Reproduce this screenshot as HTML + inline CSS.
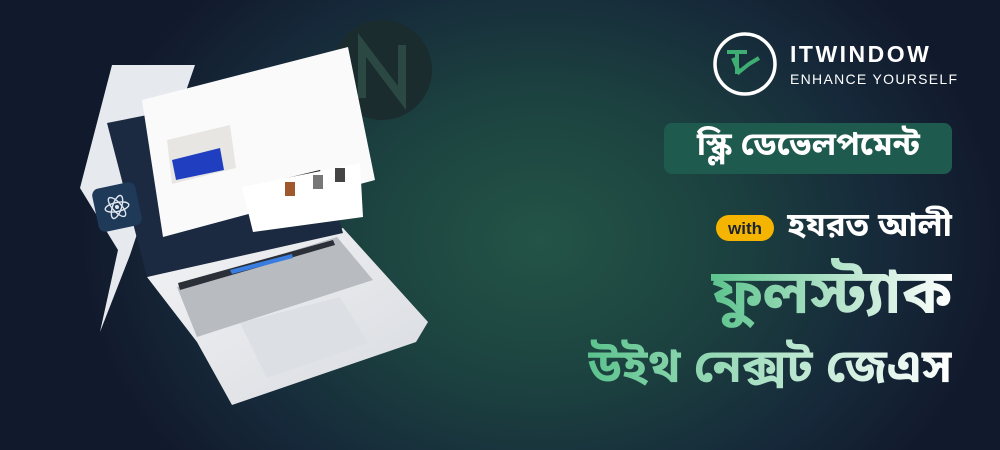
<!DOCTYPE html><html><head><meta charset="utf-8"><style>
*{margin:0;padding:0;box-sizing:border-box}
body{width:1000px;height:450px;overflow:hidden;position:relative;font-family:"Liberation Sans",sans-serif;
background:radial-gradient(ellipse 460px 360px at 540px 240px,#235446 0%,#1c4240 40%,#16293a 75%,#111a2c 100%)}
.t{position:absolute;right:48px;text-align:right;font-weight:bold;font-family:"Liberation Sans","Noto Sans Bengali","Lohit Bengali",sans-serif;white-space:nowrap}
.g{background:linear-gradient(90deg,#5cc38d,#bfe8d2 60%,#ffffff);-webkit-background-clip:text;background-clip:text;color:transparent}
</style></head><body>
<svg width="1000" height="450" style="position:absolute;left:0;top:0">
<defs><linearGradient id="bs" x1="0" y1="0" x2="1" y2="1"><stop offset="0" stop-color="#f2f3f5"/><stop offset="1" stop-color="#d8dbe0"/></linearGradient></defs>
<circle cx="382" cy="70" r="50" fill="#1a2c2d"/>
<path d="M362 98V45L402 98V45" stroke="#2b4843" stroke-width="8" fill="none"/>
<polygon points="112,65 195,65 150,195 130,255 100,332 118,250 80,188" fill="#e6e9ee"/>
<polygon points="147,277 343,228 428,322 416,342 232,405 197,342" fill="url(#bs)"/>
<polygon points="177,287 337,237 373,280 197,337" fill="#b8bcc1"/>
<polygon points="178,283 333,240 335,245 180,290" fill="#2a2f38"/>
<polygon points="230,270 292,254 293,258 232,274" fill="#3a7de0"/>
<polygon points="240,323 340,297 368,343 267,378" fill="#dcdfe3"/>
<polygon points="107,123 300,85 343,233 147,277" fill="#1b2a40"/>
<polygon points="142,100 348,47 375,180 163,237" fill="#fafafa"/>
<polygon points="167,140 230,125 236,168 172,184" fill="#e8e6e2"/>
<polygon points="172,160 220,148 224,170 176,180" fill="#1f3ec0"/>
<polygon points="262,184 320,170 322,174 264,188" fill="#111"/>
<polygon points="242,187 360,163 363,217 253,232" fill="#ffffff"/>
<rect x="285" y="182" width="10" height="14" fill="#a0592e"/>
<rect x="313" y="175" width="10" height="14" fill="#777"/>
<rect x="335" y="168" width="10" height="14" fill="#444"/>
<g transform="translate(117,207) rotate(-12)"><rect x="-22" y="-22" width="44" height="44" rx="7" fill="#1e3a58"/>
<g stroke="#dfe6ee" stroke-width="1.4" fill="none"><ellipse rx="12" ry="4.5"/><ellipse rx="12" ry="4.5" transform="rotate(60)"/><ellipse rx="12" ry="4.5" transform="rotate(-60)"/></g><circle r="2" fill="#dfe6ee"/></g>
<circle cx="745" cy="64" r="30" fill="none" stroke="#fff" stroke-width="3.5"/>
<path d="M727 52h20M737 52v22M733 58l6 14 10-8 10-6" stroke="#3fae72" stroke-width="4" fill="none"/>
<text x="790" y="62" fill="#fff" font-family="Liberation Sans" font-weight="bold" font-size="23" letter-spacing="2.5">ITWINDOW</text>
<text x="790" y="84" fill="#fff" font-family="Liberation Sans" font-size="14" letter-spacing="1.3">ENHANCE YOURSELF</text>
<rect x="664" y="123" width="288" height="51" rx="8" fill="#1f5a4e"/>
<rect x="716" y="215" width="58" height="26" rx="13" fill="#f5b400"/>
<text x="745" y="234" text-anchor="middle" font-family="Liberation Sans" font-weight="bold" font-size="17" fill="#1a2330">with</text>
</svg>
<div class="t" style="top:126px;right:80px;font-size:32px;color:#fff">স্কিল ডেভেলপমেন্ট</div>
<div class="t" style="top:206px;font-size:33px;color:#fff">হযরত আলী</div>
<div class="t g" style="top:258px;font-size:62px;line-height:70px">ফুলস্ট্যাক</div>
<div class="t g" style="top:334px;font-size:47px;line-height:64px">উইথ নেক্সট জেএস</div>
</body></html>
